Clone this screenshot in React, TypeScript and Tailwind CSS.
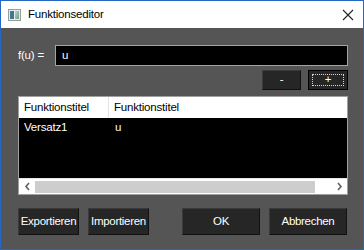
import React from "react";

const font = { fontFamily: '"Liberation Sans", Arial, sans-serif' };

function Btn({ children, className = "", focus = false }: { children: React.ReactNode; className?: string; focus?: boolean }) {
  return (
    <div
      className={
        "relative flex items-center justify-center bg-[#262626] text-white text-[11.5px] tracking-[-0.3px] border " +
        (focus ? "border-black" : "border-t-[#3a3a3a] border-l-[#3a3a3a] border-b-[#111] border-r-[#111]") +
        " " +
        className
      }
    >
      {focus && <div className="absolute inset-[3px] border border-dotted border-[#d8d8d8]" />}
      <span className="relative">{children}</span>
    </div>
  );
}

export default function App() {
  return (
    <div style={font} className="w-[364px] h-[250px] border border-[#2767c4] bg-[#555555] flex flex-col overflow-hidden">
      <div className="h-[27px] bg-white flex items-center shrink-0">
        <div className="ml-[7px] w-[13px] h-[12px] border border-[#9a9a9a] bg-[#e8ecef] flex p-[1px] gap-[1px]">
          <div className="w-[4px] bg-[#3d7a8a]" />
          <div className="flex-1 bg-gradient-to-br from-[#b9d3dc] to-[#6e9f7a]" />
        </div>
        <span className="ml-[7px] text-[11.5px] tracking-[-0.2px] text-black">Funktionseditor</span>
        <div className="ml-auto mr-[9px] w-[12px] h-[12px]">
          <svg width="12" height="12" viewBox="0 0 12 12">
            <path d="M1 1 L11 11 M11 1 L1 11" stroke="#222" strokeWidth="1.1" />
          </svg>
        </div>
      </div>
      <div className="flex-1 flex flex-col pl-[17px] pr-[15px] text-[11.5px] tracking-[-0.2px]">
        <div className="flex items-center mt-[17px]">
          <span className="w-[37px] text-white">f(u) =</span>
          <div className="flex-1 h-[21px] bg-black border border-[#a3a3a3] flex items-center pl-[6px] text-white">
            u
          </div>
        </div>
        <div className="flex justify-end gap-[7px] mt-[4px]">
          <Btn className="w-[39px] h-[20px]">-</Btn>
          <Btn className="w-[40px] h-[20px]" focus>
            +
          </Btn>
        </div>
        <div className="mt-[6px] h-[99px] border border-[#a0a0a0] bg-black flex flex-col">
          <div className="h-[21px] bg-white flex text-black">
            <div className="w-[90px] pl-[5px] flex items-center border-r border-[#e3e3e3]">Funktionstitel</div>
            <div className="pl-[5px] flex items-center">Funktionstitel</div>
          </div>
          <div className="h-[20px] flex text-white">
            <div className="w-[90px] pl-[5px] flex items-center">Versatz1</div>
            <div className="pl-[6px] flex items-center">u</div>
          </div>
          <div className="flex-1" />
          <div className="h-[16px] bg-white flex items-center border-t border-[#e8e8e8]">
            <div className="w-[16px] h-full flex items-center justify-center">
              <svg width="7" height="9" viewBox="0 0 7 9">
                <path d="M5 1 L2 4.5 L5 8" stroke="#606060" strokeWidth="1.6" fill="none" />
              </svg>
            </div>
            <div className="w-[280px] h-[12px] bg-[#cdcdcd]" />
            <div className="flex-1 h-full flex items-center justify-end pr-[4px]">
              <svg width="7" height="9" viewBox="0 0 7 9">
                <path d="M2 1 L5 4.5 L2 8" stroke="#606060" strokeWidth="1.6" fill="none" />
              </svg>
            </div>
          </div>
        </div>
        <div className="flex mt-[13px] h-[27px]">
          <Btn className="w-[61px] h-[27px]">Exportieren</Btn>
          <Btn className="w-[61px] h-[27px] ml-[9px]">Importieren</Btn>
          <Btn className="w-[78px] h-[27px] ml-[33px]">OK</Btn>
          <Btn className="w-[78px] h-[27px] ml-[9px]">Abbrechen</Btn>
        </div>
      </div>
    </div>
  );
}
